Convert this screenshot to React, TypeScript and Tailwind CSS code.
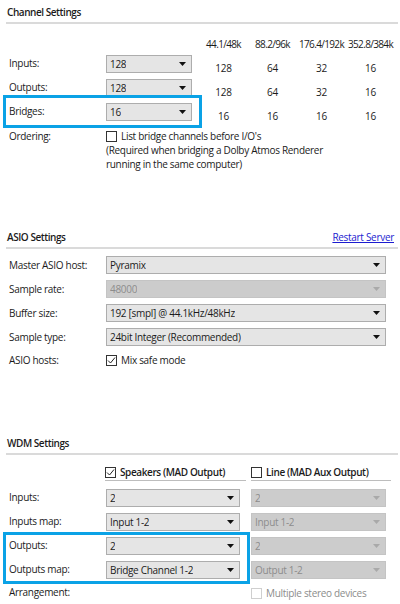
import React from 'react';

// Small filled dropdown caret
const Caret: React.FC<{ disabled?: boolean }> = ({ disabled }) => (
  <svg width="7" height="4" viewBox="0 0 7 4" className="shrink-0">
    <polygon points="0,0 7,0 3.5,4" fill={disabled ? '#a9a9a9' : '#111111'} />
  </svg>
);

const Select: React.FC<{ value: string; className?: string; disabled?: boolean }> = ({
  value,
  className = '',
  disabled,
}) => (
  <div
    className={`h-[18px] flex items-center justify-between pl-[3px] pr-[5px] border ${
      disabled ? 'bg-[#cccccc] border-[#c4c4c4] text-[#8c8c8c]' : 'bg-[#e5e5e5] border-[#adadad] text-[#1b1b1b]'
    } ${className}`}
  >
    <span className="truncate">{value}</span>
    <Caret disabled={disabled} />
  </div>
);

const Checkbox: React.FC<{ checked?: boolean; disabled?: boolean }> = ({ checked, disabled }) => (
  <span
    className={`w-[11px] h-[11px] shrink-0 border bg-white flex items-center justify-center ${
      disabled ? 'border-[#cfcfcf]' : 'border-[#333333]'
    }`}
  >
    {checked && (
      <svg width="9" height="9" viewBox="0 0 9 9">
        <polyline points="1,4.5 3.5,7 8,1.5" fill="none" stroke="#222" strokeWidth="1" />
      </svg>
    )}
  </span>
);

const SectionTitle: React.FC<{ title: string; right?: React.ReactNode }> = ({ title, right }) => (
  <>
    <div className="h-[14px] pl-[7px] pr-[6px] flex justify-between">
      <span className="font-semibold tracking-[-0.45px]">{title}</span>
      {right}
    </div>
    <div className="h-[2px] bg-[#dadada] ml-[6px] mr-[2px] mt-[3px]" />
  </>
);

const rates = ['44.1/48k', '88.2/96k', '176.4/192k', '352.8/384k'];

const channelRows = [
  { label: 'Inputs:', value: '128', counts: ['128', '64', '32', '16'] },
  { label: 'Outputs:', value: '128', counts: ['128', '64', '32', '16'] },
  { label: 'Bridges:', value: '16', counts: ['16', '16', '16', '16'] },
];

const asioRows = [
  { label: 'Master ASIO host:', value: 'Pyramix' },
  { label: 'Sample rate:', value: '48000', disabled: true },
  { label: 'Buffer size:', value: '192 [smpl] @ 44.1kHz/48kHz' },
  { label: 'Sample type:', value: '24bit Integer (Recommended)' },
];

const wdmRows = [
  { label: 'Inputs:', a: '2', b: '2' },
  { label: 'Inputs map:', a: 'Input 1-2', b: 'Input 1-2' },
  { label: 'Outputs:', a: '2', b: '2' },
  { label: 'Outputs map:', a: 'Bridge Channel 1-2', b: 'Output 1-2' },
];

export default function App() {
  return (
    <div className="relative w-[400px] h-[604px] overflow-hidden bg-white text-[#1b1b1b] text-[10px] leading-[14px] tracking-[-0.3px] font-['Open_Sans','Noto_Sans',sans-serif]">
      {/* Channel Settings */}
      <div className="pt-[5px]">
        <SectionTitle title="Channel Settings" />

        <div className="mt-[13px] h-[14px] flex pl-[199px]">
          {rates.map((r) => (
            <span key={r} className="w-[49px] text-center whitespace-nowrap tracking-[-0.65px]">
              {r}
            </span>
          ))}
        </div>

        <div className="mt-[4px]">
          {channelRows.map((row) => (
            <div key={row.label} className="h-[24px] flex items-start">
              <span className="w-[106px] pl-[9px] pt-[1px]">{row.label}</span>
              <Select value={row.value} className="w-[86px]" />
              <div className="ml-[7px] flex pt-[6px]">
                {row.counts.map((c, i) => (
                  <span key={i} className="w-[49px] text-center">
                    {c}
                  </span>
                ))}
              </div>
            </div>
          ))}
        </div>

        <div className="flex pt-[2px]">
          <span className="w-[106px] pl-[9px]">Ordering:</span>
          <div>
            <div className="flex items-center gap-[4px]">
              <Checkbox />
              <span>List bridge channels before I/O's</span>
            </div>
            <div>(Required when bridging a Dolby Atmos Renderer</div>
            <div>running in the same computer)</div>
          </div>
        </div>
      </div>

      {/* ASIO Settings */}
      <div className="mt-[59px]">
        <SectionTitle
          title="ASIO Settings"
          right={<span className="text-[#1c1cd0] underline underline-offset-[1px]">Restart Server</span>}
        />
        <div className="mt-[7px]">
          {asioRows.map((row) => (
            <div key={row.label} className="h-[24px] flex items-start">
              <span className="w-[106px] pl-[9px] pt-[2px]">{row.label}</span>
              <Select value={row.value} disabled={row.disabled} className="w-[280px]" />
            </div>
          ))}
          <div className="h-[24px] flex items-start">
            <span className="w-[106px] pl-[9px] pt-[1px]">ASIO hosts:</span>
            <div className="flex items-center gap-[4px] pt-[1px]">
              <Checkbox checked />
              <span>Mix safe mode</span>
            </div>
          </div>
        </div>
      </div>

      {/* WDM Settings */}
      <div className="mt-[60px]">
        <SectionTitle title="WDM Settings" />
        <div className="mt-[10px] flex pl-[105px]">
          <div className="w-[141px] h-[14px] flex items-center gap-[4px] font-semibold tracking-[-0.4px] border-b border-[#bdbdbd] box-content pb-[1px] whitespace-nowrap">
            <Checkbox checked />
            <span>Speakers (MAD Output)</span>
          </div>
          <div className="ml-[5px] w-[140px] h-[14px] flex items-center gap-[4px] font-semibold tracking-[-0.4px] border-b border-[#bdbdbd] box-content pb-[1px] whitespace-nowrap">
            <Checkbox />
            <span>Line (MAD Aux Output)</span>
          </div>
        </div>
        <div className="mt-[8px]">
          {wdmRows.map((row) => (
            <div key={row.label} className="h-[24px] flex items-start">
              <span className="w-[106px] pl-[9px] pt-[1px]">{row.label}</span>
              <Select value={row.a} className="w-[134px]" />
              <Select value={row.b} disabled className="ml-[11px] w-[135px]" />
            </div>
          ))}
          <div className="flex items-start">
            <span className="w-[106px] pl-[9px]">Arrangement:</span>
            <div className="ml-[145px] flex items-center gap-[4px] pt-[1px] text-[#8c8c8c]">
              <Checkbox disabled />
              <span>Multiple stereo devices</span>
            </div>
          </div>
        </div>
      </div>

      {/* highlight frames */}
      <div className="absolute left-[3px] top-[95px] w-[199px] h-[33px] border-[3px] border-[#0aa2e6] pointer-events-none" />
      <div className="absolute left-[3px] top-[532px] w-[247px] h-[52px] border-[3px] border-[#0aa2e6] pointer-events-none" />
    </div>
  );
}
